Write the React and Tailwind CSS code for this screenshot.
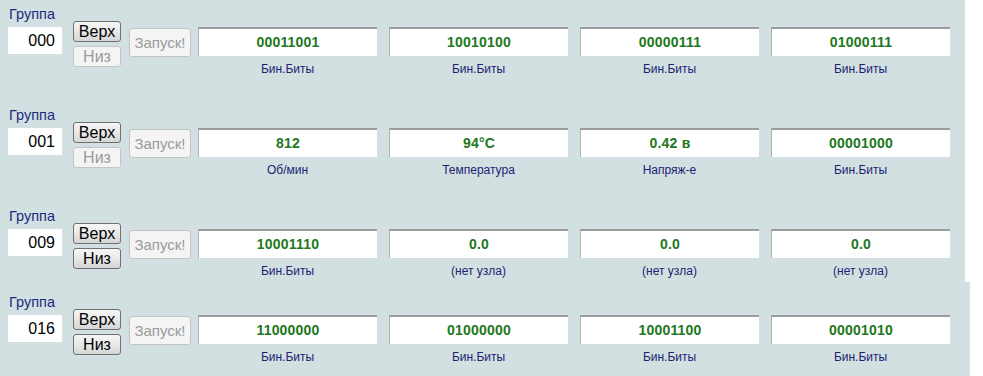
const groups = [
  {
    id: '000',
    lowDisabled: true,
    cells: [
      { value: '00011001', label: 'Бин.Биты' },
      { value: '10010100', label: 'Бин.Биты' },
      { value: '00000111', label: 'Бин.Биты' },
      { value: '01000111', label: 'Бин.Биты' },
    ],
  },
  {
    id: '001',
    lowDisabled: true,
    cells: [
      { value: '812', label: 'Об/мин' },
      { value: '94°C', label: 'Температура' },
      { value: '0.42 в', label: 'Напряж-е' },
      { value: '00001000', label: 'Бин.Биты' },
    ],
  },
  {
    id: '009',
    lowDisabled: false,
    cells: [
      { value: '10001110', label: 'Бин.Биты' },
      { value: '0.0', label: '(нет узла)' },
      { value: '0.0', label: '(нет узла)' },
      { value: '0.0', label: '(нет узла)' },
    ],
  },
]

const lastGroup = {
  id: '016',
  lowDisabled: false,
  cells: [
    { value: '11000000', label: 'Бин.Биты' },
    { value: '01000000', label: 'Бин.Биты' },
    { value: '10001100', label: 'Бин.Биты' },
    { value: '00001010', label: 'Бин.Биты' },
  ],
}

const enabledBtn =
  'border border-[#707070] rounded-[3px] bg-gradient-to-b from-[#f6f6f6] via-[#e8e8e8] to-[#d6d6d6] text-black'
const disabledBtn = 'border border-[#c4c4c4] rounded-[3px] bg-[#f4f4f4] text-[#9a9a9a]'

function Group({ group }) {
  return (
    <div className="flex items-start h-[101px]">
      {/* group number */}
      <div className="ml-[8px] w-[54px] flex flex-col">
        <div className="text-[14.5px] leading-[16px] text-[#1c2a80] pl-[1px]">Группа</div>
        <div className="mt-[5px] h-[27px] bg-white text-[16px] leading-[27px] text-right pr-[7px] text-black">
          {group.id}
        </div>
      </div>

      {/* up / down */}
      <div className="ml-[11px] mt-[15px] flex flex-col gap-[4px]">
        <button className={`w-[48px] h-[21px] text-[16px] leading-[19px] ${enabledBtn}`}>Верх</button>
        <button
          disabled={group.lowDisabled}
          className={`w-[48px] h-[21px] text-[16px] leading-[19px] ${group.lowDisabled ? disabledBtn : enabledBtn}`}
        >
          Низ
        </button>
      </div>

      {/* run */}
      <button
        disabled
        className={`ml-[8px] mt-[22px] w-[62px] h-[29px] text-[15px] leading-[27px] ${disabledBtn}`}
      >
        Запуск!
      </button>

      {/* values */}
      <div className="ml-[7px] mt-[21px] flex gap-[12px]">
        {group.cells.map((cell, i) => (
          <div key={i} className="w-[179px] flex flex-col items-center">
            <div className="w-full h-[29px] bg-white border-t-2 border-l border-t-[#9c9c9c] border-l-[#b0b0b0] flex items-center justify-center text-[14px] font-bold tracking-[0.2px] text-[#217821]">
              {cell.value}
            </div>
            <div className="mt-[6px] text-[12px] leading-[14px] text-[#1c2275]">{cell.label}</div>
          </div>
        ))}
      </div>
    </div>
  )
}

export default function App() {
  return (
    <div
      className="w-[983px] h-[376px] bg-white overflow-hidden"
      style={{ fontFamily: '"Liberation Sans", Arial, sans-serif' }}
    >
      <div className="w-[965px] h-[282px] bg-[#d2e0e1] pt-[6px]">
        {groups.map((g) => (
          <Group key={g.id} group={g} />
        ))}
      </div>
      <div className="w-[970px] h-[94px] bg-[#d2e0e1] pt-[12px]">
        <Group group={lastGroup} />
      </div>
    </div>
  )
}
